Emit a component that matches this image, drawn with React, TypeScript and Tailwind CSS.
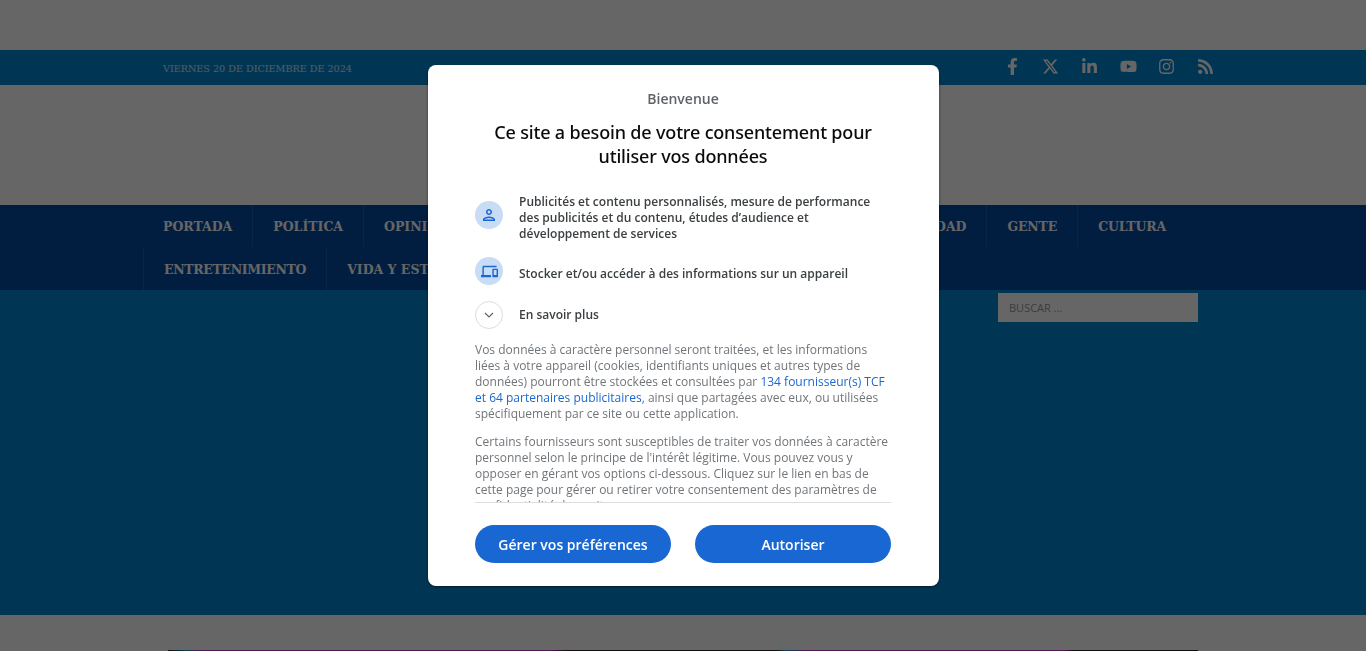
import { FaFacebookF, FaInstagram, FaLinkedinIn, FaRss, FaYoutube } from "react-icons/fa";
import { FaXTwitter } from "react-icons/fa6";

const serif = "font-['DejaVu_Serif',serif]";

function NavItem({ label, last, tight }: { label: string; last?: boolean; tight?: string }) {
  return (
    <a className={`flex items-center px-5 pt-[3px] font-bold text-[12.5px] text-white ${tight ?? ""} ${last ? "" : "border-r border-white/10"}`}>
      {label}
    </a>
  );
}

function TopBar() {
  const icons = [FaFacebookF, FaXTwitter, FaLinkedinIn, FaYoutube, FaInstagram, FaRss];
  return (
    <div className="mt-[50px] h-[35px] bg-[#0088d3]">
      <div className="mx-auto flex h-full w-[1040px] items-center justify-between">
        <span className={`${serif} pt-[3px] text-[9.6px] text-white/80`}>VIERNES 20 DE DICIEMBRE DE 2024</span>
        <div className="mr-[-22px] flex items-center">
          {icons.map((Icon, i) => (
            <span key={i} className="flex w-[38.7px] justify-center pb-[2px] text-white">
              <Icon size={17} />
            </span>
          ))}
        </div>
      </div>
    </div>
  );
}

function MainNav() {
  return (
    <nav className={`${serif} h-[85px] bg-[#034aa0]`}>
      <div className="ml-[143px] flex h-[42px] w-[1043px] justify-between">
        <div className="flex">
          <NavItem label="PORTADA" />
          <NavItem label="POLÍTICA" />
          <NavItem label="OPINIÓN" />
        </div>
        <div className="flex">
          <NavItem label="SOCIEDAD" />
          <NavItem label="GENTE" tight="tracking-[-0.15px]" />
          <NavItem label="CULTURA" tight="tracking-[-0.15px]" last />
        </div>
      </div>
      <div className="ml-[143px] flex h-[43px] w-max border-l border-white/10">
        <NavItem label="ENTRETENIMIENTO" tight="tracking-[-0.33px]" />
        <NavItem label="VIDA Y ESTILO" />
      </div>
    </nav>
  );
}

function PersonIcon() {
  return (
    <svg viewBox="0 0 24 24" className="h-[18px] w-[18px] fill-[#1967d2]">
      <path d="M12 6c1.1 0 2 .9 2 2s-.9 2-2 2-2-.9-2-2 .9-2 2-2m0 10c2.7 0 5.8 1.29 6 2H6c.23-.72 3.31-2 6-2m0-12C9.79 4 8 5.79 8 8s1.79 4 4 4 4-1.79 4-4-1.79-4-4-4zm0 10c-2.67 0-8 1.34-8 4v2h16v-2c0-2.66-5.33-4-8-4z" />
    </svg>
  );
}

function DevicesIcon() {
  return (
    <svg viewBox="0 0 24 24" className="h-[17px] w-[17px] fill-[#1967d2]">
      <path d="M4 6h18V4H4c-1.1 0-2 .9-2 2v11H0v3h14v-3H4V6zm19 2h-6c-.55 0-1 .45-1 1v10c0 .55.45 1 1 1h6c.55 0 1-.45 1-1V9c0-.55-.45-1-1-1zm-1 9h-4v-7h4v7z" />
    </svg>
  );
}

function ConsentModal() {
  return (
    <div className="fixed inset-0 flex items-center justify-center bg-black/60 font-['Open_Sans',sans-serif]">
      <div className="w-[511px] rounded-lg bg-white px-[47.5px] pt-6 pb-[23px] shadow-[0_1px_3px_rgba(0,0,0,0.5)]">
        <p className="text-center text-sm leading-5 font-semibold text-[#5f6368]">Bienvenue</p>
        <h1 className="mt-[11px] text-center font-['Noto_Sans',sans-serif] text-lg leading-6 font-medium tracking-[-0.17px] text-[#0b0b0b]">
          Ce site a besoin de votre consentement pour utiliser vos données
        </h1>
        <div className="mt-[26px] flex flex-col text-xs leading-4 font-semibold text-[#3c4043]">
          <div className="flex items-start gap-4">
            <span className="mt-[7px] flex h-7 w-7 shrink-0 items-center justify-center rounded-full bg-[#c9dcf6]">
              <PersonIcon />
            </span>
            <p className="pr-4">Publicités et contenu personnalisés, mesure de performance des publicités et du contenu, études d’audience et développement de services</p>
          </div>
          <div className="mt-[15px] flex items-start gap-4">
            <span className="flex h-7 w-7 shrink-0 items-center justify-center rounded-full bg-[#c9dcf6]">
              <DevicesIcon />
            </span>
            <p className="mt-[9px]">Stocker et/ou accéder à des informations sur un appareil</p>
          </div>
          <div className="mt-4 flex items-start gap-4">
            <span className="flex h-7 w-7 shrink-0 items-center justify-center rounded-full border border-[#dadce0]">
              <svg viewBox="0 0 24 24" className="h-4 w-4 fill-none stroke-[#5f6368] stroke-[1.8]">
                <path d="M6 9l6 6 6-6" />
              </svg>
            </span>
            <p className="mt-[6px]">En savoir plus</p>
          </div>
        </div>
        <div className="mt-[13px] h-[161px] overflow-hidden border-b border-[#dadce0] text-xs leading-4 text-[#70757a]">
          <p>
            Vos données à caractère personnel seront traitées, et les informations liées à votre appareil (cookies, identifiants uniques et autres types de données) pourront être stockées et consultées par{" "}
            <a className="text-[#1967d2]">134 fournisseur(s) TCF et 64 partenaires publicitaires</a>, ainsi que partagées avec eux, ou utilisées spécifiquement par ce site ou cette application.
          </p>
          <p className="mt-3">
            Certains fournisseurs sont susceptibles de traiter vos données à caractère personnel selon le principe de l'intérêt légitime. Vous pouvez vous y opposer en gérant vos options ci-dessous. Cliquez sur le lien en bas de cette page pour gérer ou retirer votre consentement des paramètres de confidentialité de ce site.
          </p>
        </div>
        <div className="mt-[22px] flex gap-6">
          <button className="h-[38px] flex-1 rounded-full bg-[#1967d2] pt-0.5 text-sm font-semibold text-white">Gérer vos préférences</button>
          <button className="h-[38px] flex-1 rounded-full bg-[#1967d2] pt-0.5 text-sm font-semibold text-white">Autoriser</button>
        </div>
      </div>
    </div>
  );
}

export default function App() {
  return (
    <div className="relative h-[651px] overflow-hidden bg-white">
      <TopBar />
      <div className="h-[120px]" />
      <MainNav />
      <main className="h-[325px] bg-[#0088d3] pt-[3px]">
        <div className="mx-auto flex w-[1030px] justify-end">
          <input
            placeholder="BUSCAR ..."
            className="h-[29px] w-[200px] bg-white px-[11px] font-['Open_Sans',sans-serif] text-[11px] placeholder:text-[#999]"
          />
        </div>
      </main>
      <div className="mx-auto mt-[35px] h-px w-[1030px] bg-[linear-gradient(90deg,#222_0%,#2a9fd0_2%,#c43fd0_3%,#c43fd0_37%,#222_39%,#222_59%,#2a9fd0_60%,#c43fd0_62%,#c43fd0_87%,#222_88%)]" />
      <ConsentModal />
    </div>
  );
}
